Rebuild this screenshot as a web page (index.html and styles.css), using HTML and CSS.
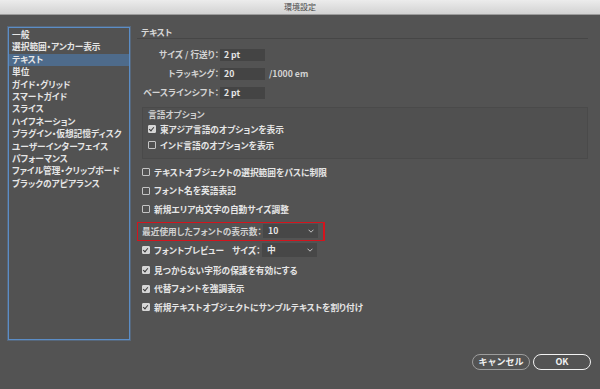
FILE: index.html
```html
<!DOCTYPE html>
<html lang="ja">
<head>
    <meta charset="UTF-8">
    <title>環境設定</title>
    <link rel="stylesheet" href="styles.css">
</head>
<body>
    <div class="window">
        <div class="titlebar">環境設定</div>

        <div class="content">
            <!-- Category list -->
            <ul class="category-list">
                <li>一般</li>
                <li>選択範囲・アンカー表示</li>
                <li class="selected">テキスト</li>
                <li>単位</li>
                <li>ガイド・グリッド</li>
                <li>スマートガイド</li>
                <li>スライス</li>
                <li>ハイフネーション</li>
                <li>プラグイン・仮想記憶ディスク</li>
                <li>ユーザーインターフェイス</li>
                <li>パフォーマンス</li>
                <li>ファイル管理・クリップボード</li>
                <li>ブラックのアピアランス</li>
            </ul>

            <!-- Text settings -->
            <div class="panel">
                <div class="panel-title">テキスト</div>

                <div class="field-rows">
                    <div class="field-row">
                        <span class="field-label">サイズ / 行送り：</span>
                        <span class="text-input">2 pt</span>
                    </div>
                    <div class="field-row">
                        <span class="field-label">トラッキング：</span>
                        <span class="text-input">20</span>
                        <span class="unit">/1000 em</span>
                    </div>
                    <div class="field-row">
                        <span class="field-label">ベースラインシフト：</span>
                        <span class="text-input">2 pt</span>
                    </div>
                </div>

                <div class="group-box">
                    <div class="group-label">言語オプション</div>
                    <div class="check-row"><span class="checkbox checked"></span>東アジア言語のオプションを表示</div>
                    <div class="check-row"><span class="checkbox"></span>インド言語のオプションを表示</div>
                </div>

                <div class="options">
                    <div class="check-row"><span class="checkbox"></span>テキストオブジェクトの選択範囲をパスに制限</div>
                    <div class="check-row"><span class="checkbox"></span>フォント名を英語表記</div>
                    <div class="check-row"><span class="checkbox"></span>新規エリア内文字の自動サイズ調整</div>
                </div>

                <div class="select-row highlighted">
                    <span class="select-label">最近使用したフォントの表示数：</span>
                    <span class="dropdown">10
                        <svg class="chevron" width="6" height="4" viewBox="0 0 6 4"><path d="M0.5 0.7 L3 3.2 L5.5 0.7" fill="none" stroke="#c4c4c4" stroke-width="1"/></svg>
                    </span>
                </div>
                <div class="select-row preview-row">
                    <span class="checkbox checked"></span>
                    <span class="select-label preview-label">フォントプレビュー</span>
                    <span class="select-label">サイズ：</span>
                    <span class="dropdown">中
                        <svg class="chevron" width="6" height="4" viewBox="0 0 6 4"><path d="M0.5 0.7 L3 3.2 L5.5 0.7" fill="none" stroke="#c4c4c4" stroke-width="1"/></svg>
                    </span>
                </div>

                <div class="options lower">
                    <div class="check-row"><span class="checkbox checked"></span>見つからない字形の保護を有効にする</div>
                    <div class="check-row"><span class="checkbox checked"></span>代替フォントを強調表示</div>
                    <div class="check-row"><span class="checkbox checked"></span>新規テキストオブジェクトにサンプルテキストを割り付け</div>
                </div>
            </div>
        </div>

        <div class="footer">
            <button class="btn">キャンセル</button>
            <button class="btn btn-ok">OK</button>
        </div>
    </div>
</body>
</html>
```

FILE: styles.css
```css
body {
    margin: 0;
    background-color: #535353;
    font-family: "Noto Sans CJK JP", "Liberation Sans", sans-serif;
    font-size: 8.7px;
    font-weight: bold;
    color: #e6e6e6;
    font-feature-settings: "palt";
}

.window {
    width: 600px;
    height: 389px;
    display: flex;
    flex-direction: column;
    overflow: hidden;
}

.titlebar {
    height: 14px;
    line-height: 14px;
    text-align: center;
    font-size: 8px;
    font-weight: normal;
    color: #4a4a4a;
    background: linear-gradient(#ececec, #d2d2d2);
    border-bottom: 1px solid #9c9c9c;
}

.content {
    display: flex;
    margin-top: 12px;
    padding-left: 8px;
}

/* Category list on the left */
.category-list {
    list-style: none;
    margin: 0;
    padding: 1px 0 0;
    width: 120px;
    height: 310px;
    border: 1px solid #5b8dc6;
    box-shadow: 0 0 0 1px rgba(91, 141, 198, 0.35);
    background-color: #525252;
}

.category-list li {
    height: 12.4px;
    line-height: 12.4px;
    padding-left: 3px;
    white-space: nowrap;
}

.category-list li.selected {
    background-color: #4e6b8b;
}

/* Right side */
.panel {
    flex: 1;
    margin-left: 7px;
    margin-right: 12px;
}

.panel-title {
    height: 11px;
    line-height: 11px;
    padding-left: 4px;
    border-bottom: 1px solid #464646;
    color: #d8d8d8;
}

.field-rows {
    margin-top: 6px;
}

.field-row {
    height: 19px;
    display: flex;
    align-items: center;
}

.field-label {
    width: 82px;
    text-align: right;
    white-space: nowrap;
    color: #d4d4d4;
}

.text-input {
    width: 41px;
    height: 12px;
    line-height: 12px;
    padding-left: 4px;
    margin-left: 1px;
    background-color: #444444;
}

.unit {
    margin-left: 4px;
    color: #d4d4d4;
}

.group-box {
    margin-top: 5px;
    margin-left: 5px;
    height: 50px;
    padding: 0 5px;
    border: 1px solid #4a4a4a;
    background-color: #505050;
}

.group-label {
    height: 13px;
    line-height: 13px;
    color: #cfcfcf;
}

.group-box .check-row {
    height: 16px;
}

.check-row {
    height: 18.5px;
    display: flex;
    align-items: center;
    white-space: nowrap;
}

.options {
    margin-top: 4px;
    padding-left: 5px;
}

.options.lower {
    margin-top: 1px;
}

.options .check-row {
    height: 18.6px;
}

.checkbox {
    width: 6px;
    height: 6px;
    border: 1px solid #c4c4c4;
    border-radius: 1px;
    margin-right: 4px;
    position: relative;
    flex-shrink: 0;
}

.checkbox.checked {
    background-color: #d6d6d6;
    border-color: #d6d6d6;
}

.checkbox.checked::after {
    content: "";
    position: absolute;
    left: 1px;
    top: 0;
    width: 2px;
    height: 4px;
    border-right: 1px solid #3a3a3a;
    border-bottom: 1px solid #3a3a3a;
    transform: rotate(40deg);
}

.select-row {
    box-sizing: border-box;
    height: 19px;
    display: flex;
    align-items: center;
    padding-left: 5px;
    white-space: nowrap;
}

.select-row.highlighted {
    height: 19px;
    margin-top: 3px;
    width: 188px;
    padding-left: 4px;
    padding-right: 5px;
    border: 1px solid #d4141d;
    border-right-width: 2px;
}

.preview-row {
    width: 180px;
}

.highlighted .select-label {
    color: #d0d0d0;
}

.preview-label {
    width: 78px;
}

.dropdown {
    width: 50px;
    height: 14px;
    line-height: 14px;
    padding-left: 5px;
    margin-left: auto;
    background-color: #474747;
    display: flex;
    justify-content: space-between;
    align-items: center;
}

.chevron {
    margin-right: 4px;
}

.footer {
    display: flex;
    justify-content: flex-end;
    gap: 3px;
    padding-right: 9px;
    margin-top: 14px;
}

.btn {
    width: 58px;
    height: 16px;
    padding: 0;
    border-radius: 8px;
    border: 1px solid #9d9d9d;
    background-color: #535353;
    color: #f0f0f0;
    font-family: "Noto Sans CJK JP", "Liberation Sans", sans-serif;
    font-size: 9px;
    font-weight: bold;
    line-height: 14px;
}

.btn-ok {
    border: 1.5px solid #f2f2f2;
}
```
